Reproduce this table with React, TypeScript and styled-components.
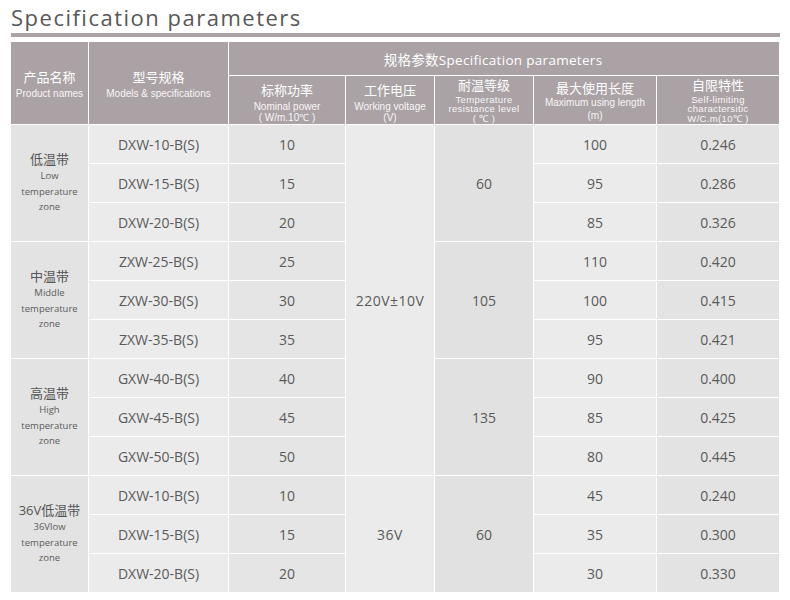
import React from "react";
import styled, { createGlobalStyle } from "styled-components";

const Global = createGlobalStyle`
  html, body { margin: 0; padding: 0; background: #ffffff; }
  body { font-family: "Open Sans", "Noto Sans CJK SC", sans-serif; }
`;

const Page = styled.div`
  padding: 2px 10px 0 10px;
  width: 770px;
`;

const Title = styled.h1`
  margin: 0;
  font-family: "Open Sans", sans-serif;
  font-weight: 400;
  font-size: 22px;
  line-height: 30px;
  letter-spacing: 1.5px;
  color: #585858;
  padding-left: 1px;
`;

const Bar = styled.div`
  margin: 1px 0 0 1px;
  height: 4px;
  width: 769px;
  background: #aaa2a5;
`;

const Table = styled.table`
  margin-top: 4px;
  border-collapse: separate;
  border-spacing: 1px;
  table-layout: fixed;
  width: 770px;
  background: #ffffff;
`;

const HeadCell = styled.th<{ $h?: number; $top?: number; $shift?: number }>`
  background: #aaa2a5;
  color: #ffffff;
  font-weight: 400;
  padding: ${(p) => (p.$top !== undefined ? `${p.$top}px 0 0 0` : "0")};
  padding-right: ${(p) => p.$shift ?? 0}px;
  vertical-align: ${(p) => (p.$top !== undefined ? "top" : "middle")};
  text-align: center;
  height: ${(p) => p.$h ?? 48}px;
  box-sizing: border-box;
`;

const GroupTitle = styled.span`
  font-family: "Open Sans", "Noto Sans CJK SC", sans-serif;
  font-size: 13.5px;
  letter-spacing: 0.3px;
  color: #ffffff;
`;

const HeadZh = styled.div<{ $lh?: number }>`
  font-family: "Noto Sans CJK SC", sans-serif;
  font-size: 13px;
  line-height: ${(p) => p.$lh ?? 18}px;
  color: #ffffff;
`;

const HeadEn = styled.div<{ $gap?: number; $small?: boolean }>`
  font-family: "Liberation Sans", Arial, sans-serif;
  font-size: ${(p) => (p.$small ? 9.5 : 10)}px;
  letter-spacing: ${(p) => (p.$small ? 0.35 : 0)}px;
  line-height: ${(p) => (p.$small ? 9.8 : 11)}px;
  margin-top: ${(p) => p.$gap ?? 0}px;
  color: #f8f6f7;
  white-space: nowrap;
`;

const Cell = styled.td<{ $bg: string }>`
  background: ${(p) => p.$bg};
  height: 38px;
  padding: 0;
  box-sizing: border-box;
  text-align: center;
  vertical-align: middle;
  font-family: "Open Sans", sans-serif;
  font-size: 14px;
  color: #5a5a5a;
`;

const WideValue = styled.span`
  letter-spacing: 0.5px;
`;

const NameZh = styled.div`
  font-family: "Open Sans", "Noto Sans CJK SC", sans-serif;
  font-size: 13px;
  line-height: 17px;
  color: #555555;
`;

const NameEn = styled.div`
  font-family: "Open Sans", sans-serif;
  font-size: 9.5px;
  line-height: 15.5px;
  color: #5c5c5c;
`;

const COL = ["#e3e3e3", "#ebebeb", "#e5e5e5", "#ebebeb", "#e1e1e1", "#ebebeb", "#e3e3e3"];
const WIDTHS = [77, 139, 116, 88, 98, 122, 122];

type Group = {
  zh: string;
  en: string[];
  temp: string;
  rows: [string, string, string, string][];
};

const groups: Group[] = [
  {
    zh: "低温带",
    en: ["Low", "temperature", "zone"],
    temp: "60",
    rows: [
      ["DXW-10-B(S)", "10", "100", "0.246"],
      ["DXW-15-B(S)", "15", "95", "0.286"],
      ["DXW-20-B(S)", "20", "85", "0.326"],
    ],
  },
  {
    zh: "中温带",
    en: ["Middle", "temperature", "zone"],
    temp: "105",
    rows: [
      ["ZXW-25-B(S)", "25", "110", "0.420"],
      ["ZXW-30-B(S)", "30", "100", "0.415"],
      ["ZXW-35-B(S)", "35", "95", "0.421"],
    ],
  },
  {
    zh: "高温带",
    en: ["High", "temperature", "zone"],
    temp: "135",
    rows: [
      ["GXW-40-B(S)", "40", "90", "0.400"],
      ["GXW-45-B(S)", "45", "85", "0.425"],
      ["GXW-50-B(S)", "50", "80", "0.445"],
    ],
  },
  {
    zh: "36V低温带",
    en: ["36Vlow", "temperature", "zone"],
    temp: "60",
    rows: [
      ["DXW-10-B(S)", "10", "45", "0.240"],
      ["DXW-15-B(S)", "15", "35", "0.300"],
      ["DXW-20-B(S)", "20", "30", "0.330"],
    ],
  },
];

export default function App() {
  return (
    <Page>
      <Global />
      <Title>Specification parameters</Title>
      <Bar />
      <Table>
        <colgroup>
          {WIDTHS.map((w, i) => (
            <col key={i} style={{ width: w }} />
          ))}
        </colgroup>
        <thead>
          <tr>
            <HeadCell rowSpan={2} $h={82}>
              <HeadZh>产品名称</HeadZh>
              <HeadEn $gap={2}>Product names</HeadEn>
            </HeadCell>
            <HeadCell rowSpan={2} $h={82}>
              <HeadZh>型号规格</HeadZh>
              <HeadEn $gap={2}>Models &amp; specifications</HeadEn>
            </HeadCell>
            <HeadCell colSpan={5} $h={33} $shift={22}>
              <GroupTitle>规格参数Specification parameters</GroupTitle>
            </HeadCell>
          </tr>
          <tr>
            <HeadCell $top={5}>
              <HeadZh>标称功率</HeadZh>
              <HeadEn $gap={2}>Nominal power</HeadEn>
              <HeadEn>( W/m.10℃ )</HeadEn>
            </HeadCell>
            <HeadCell $top={5}>
              <HeadZh>工作电压</HeadZh>
              <HeadEn $gap={2}>Working voltage</HeadEn>
              <HeadEn>(V)</HeadEn>
            </HeadCell>
            <HeadCell $top={0}>
              <HeadZh $lh={18.5}>耐温等级</HeadZh>
              <HeadEn $small>Temperature</HeadEn>
              <HeadEn $small>resistance level</HeadEn>
              <HeadEn $small>( ℃ )</HeadEn>
            </HeadCell>
            <HeadCell $top={3}>
              <HeadZh>最大使用长度</HeadZh>
              <HeadEn>Maximum using length</HeadEn>
              <HeadEn $gap={2}>(m)</HeadEn>
            </HeadCell>
            <HeadCell $top={0}>
              <HeadZh $lh={18.5}>自限特性</HeadZh>
              <HeadEn $small>Self-limiting</HeadEn>
              <HeadEn $small>charactersitic</HeadEn>
              <HeadEn $small>W/C.m(10℃ )</HeadEn>
            </HeadCell>
          </tr>
        </thead>
        <tbody>
          {groups.map((g, gi) =>
            g.rows.map((r, ri) => (
              <tr key={`${gi}-${ri}`}>
                {ri === 0 && (
                  <Cell $bg={COL[0]} rowSpan={3}>
                    <NameZh>{g.zh}</NameZh>
                    {g.en.map((l) => (
                      <NameEn key={l}>{l}</NameEn>
                    ))}
                  </Cell>
                )}
                <Cell $bg={COL[1]}>{r[0]}</Cell>
                <Cell $bg={COL[2]}>{r[1]}</Cell>
                {ri === 0 && gi === 0 && (
                  <Cell $bg={COL[3]} rowSpan={9}>
                    <WideValue>220V±10V</WideValue>
                  </Cell>
                )}
                {ri === 0 && gi === 3 && (
                  <Cell $bg={COL[3]} rowSpan={3}>
                    <WideValue>36V</WideValue>
                  </Cell>
                )}
                {ri === 0 && (
                  <Cell $bg={COL[4]} rowSpan={3}>
                    {g.temp}
                  </Cell>
                )}
                <Cell $bg={COL[5]}>{r[2]}</Cell>
                <Cell $bg={COL[6]}>{r[3]}</Cell>
              </tr>
            ))
          )}
        </tbody>
      </Table>
    </Page>
  );
}
